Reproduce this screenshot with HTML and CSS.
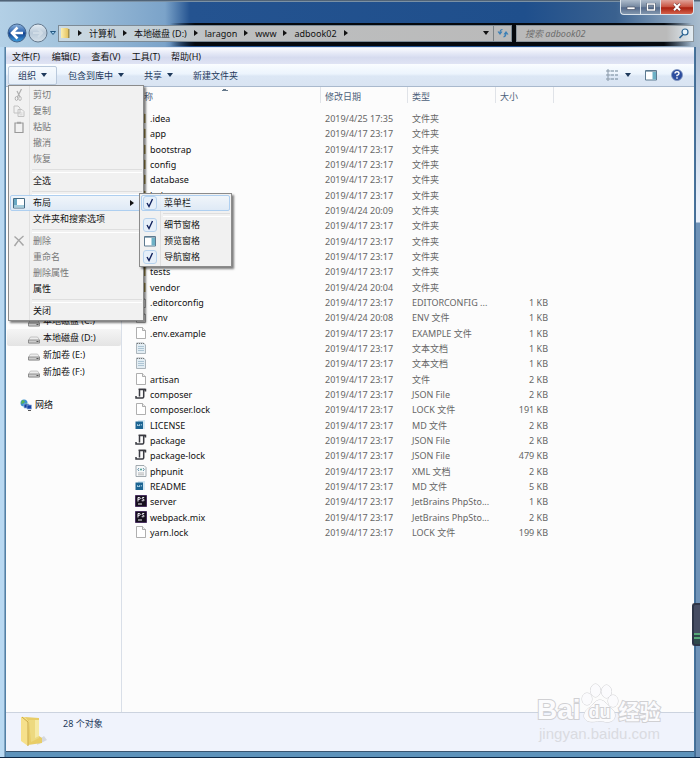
FILE: index.html
```html
<!DOCTYPE html>
<html lang="zh-CN">
<head>
<meta charset="utf-8">
<title>adbook02</title>
<link rel="stylesheet" href="styles.css">
</head>
<body>
<svg class="defs" aria-hidden="true">
  <defs>
    <linearGradient id="gold" x1="0" x2="1"><stop offset="0" stop-color="#fbeeb0"/><stop offset="1" stop-color="#e2bd55"/></linearGradient>
    <linearGradient id="orb" x1="0" y1="0" x2="0" y2="1"><stop offset="0" stop-color="#8fb4dc"/><stop offset=".45" stop-color="#2f66b0"/><stop offset=".5" stop-color="#123f8c"/><stop offset="1" stop-color="#3fa0e0"/></linearGradient>
    <linearGradient id="pale" x1="0" y1="0" x2="0" y2="1"><stop offset="0" stop-color="#e6eef5"/><stop offset=".5" stop-color="#b9c9d8"/><stop offset="1" stop-color="#d5e1ea"/></linearGradient>
    <symbol id="i-folder" viewBox="0 0 12 12"><path d="M2 1h6l2 1v9H2z" fill="url(#gold)"/><path d="M9 2h1.500v9H9z" fill="#a3914f"/></symbol>
    <symbol id="i-page" viewBox="0 0 12 12"><path d="M1.500.5h6l3 3v8h-9z" fill="#fff" stroke="#9a9a9a" stroke-width=".8"/><path d="M7.500.5v3h3" fill="#eee" stroke="#9a9a9a" stroke-width=".8"/></symbol>
    <symbol id="i-text" viewBox="0 0 12 12"><path d="M1.500 1h7l2 2v8.500h-9z" fill="#e3edf3" stroke="#9aa4ab" stroke-width=".8"/><path d="M2 1.500h7" stroke="#777" stroke-dasharray="1 1"/><path d="M3 4.500h6M3 6.500h6M3 8.500h6" stroke="#9fbacb" stroke-width=".8"/></symbol>
    <symbol id="i-json" viewBox="0 0 12 12"><path d="M10.500 3.500V1.500H4.500V8.500M1 8v2h6.500q1.200 0 1.200-1.200V2" fill="none" stroke="#3a3b42" stroke-width="1.500"/><path d="M3.500 1.200h7" stroke="#3a3b42"/></symbol>
    <symbol id="i-md" viewBox="0 0 12 12"><path d="M3 1h7v9H3z" fill="#d5e8f2"/><path d="M.5 2.500h7.500v7.500H.5z" fill="#1c6492"/><path d="M2.500 7V5.500l1 1 1-1V7M6.300 5v1.500" stroke="#c9e6f5" fill="none" stroke-width=".8"/></symbol>
    <symbol id="i-xml" viewBox="0 0 12 12"><path d="M1 .5h8l2 2v9H1z" fill="#f7f9fa" stroke="#8c969c" stroke-width=".8"/><path d="M4 3L2.800 4.500 4 6M8 3l1.200 1.500L8 6" fill="none" stroke="#3c7793" stroke-width=".8"/><circle cx="6" cy="4.500" r="1" fill="#4a9a8c"/><path d="M3 8h6M3 9.800h6" stroke="#999" stroke-width=".7"/></symbol>
    <symbol id="i-ps" viewBox="0 0 12 12"><path d="M.5.5h11v11H.5z" fill="#16101e" stroke="#48305f"/><path d="M3 6.500V2.500h1.300q1 0 1 .9t-1 .9H3M9.200 2.500Q7 2 7 3.200q0 .6 1.100.9t1.100 1Q9 6.300 6.700 5.700" fill="none" stroke="#f5f0fa"/><path d="M3 9h4" stroke="#eee"/></symbol>
    <symbol id="i-drive" viewBox="0 0 12 12"><path d="M2.500 4h7l2 3v3H.5V7z" fill="#ececec" stroke="#aaa" stroke-width=".6"/><path d="M.5 7h11v3H.5z" fill="#ccc" stroke="#7f7f7f" stroke-width=".8"/><path d="M8.500 8.500h2" stroke="#555"/></symbol>
    <symbol id="i-net" viewBox="0 0 12 12"><circle cx="4" cy="4" r="3.500" fill="#3d91cf"/><path d="M2 1l3 1-1 2-3 1M5 5l2-1v3z" fill="#59b352"/><path d="M4 5h5v4H4z" fill="#153f9b" stroke="#9cc0e6" stroke-width=".7"/><path d="M7 6h4.500v4H7z" fill="#1743a8" stroke="#8fb0da" stroke-width=".7"/><path d="M8 11.500h3" stroke="#555"/></symbol>
    <symbol id="i-cut" viewBox="0 0 12 12"><path d="M8.500 0L4.500 8M4 2l3 6" stroke="#b0b0b0" stroke-width="1.200" fill="none"/><ellipse cx="3.500" cy="9.500" rx="1.300" ry="2" fill="none" stroke="#b0b0b0"/><ellipse cx="7" cy="9.500" rx="1.300" ry="2" fill="none" stroke="#bbb"/></symbol>
    <symbol id="i-copy" viewBox="0 0 12 12"><path d="M1 1h4l2 2v5H1zM5 4.500h4l2 2v5H5z" fill="#f1f1f1" stroke="#c2c2c2"/><path d="M6.500 8h3M6.500 9.800h3" stroke="#ccc" stroke-width=".8"/></symbol>
    <symbol id="i-paste" viewBox="0 0 12 12"><path d="M2 2h8v9.500H2z" fill="#f1f1f1" stroke="#999" stroke-width="1.200"/><path d="M4 .8h4v2H4z" fill="#a5a5a5"/></symbol>
    <symbol id="i-delete" viewBox="0 0 12 12"><path d="M1.500 1.500Q6 5 10.500 10.500M10.500 1Q5 5 1.500 11" fill="none" stroke="#a6a6a6" stroke-width="1.500"/></symbol>
    <symbol id="i-layout" viewBox="0 0 12 12"><path d="M.5 1.500h11v9.500H.5z" fill="#fff" stroke="#456b84"/><path d="M1 2h3v6H1z" fill="#69a9c4"/><path d="M1 8h10v2.500H1z" fill="#a5cddd"/></symbol>
    <symbol id="i-preview" viewBox="0 0 12 12"><path d="M.5 1.500h11v9.500H.5z" fill="#fff" stroke="#5d7a90"/><path d="M7.500 2H11v8.500H7.500z" fill="#6db1c6"/><path d="M1 2.500h10" stroke="#96adbb"/></symbol>
    <symbol id="i-check" viewBox="0 0 12 12"><path d="M3 6l2 3.500L8.500 2" fill="none" stroke="#13235e" stroke-width="1.400"/></symbol>
    <symbol id="i-down" viewBox="0 0 6 4"><path d="M0 0h6L3 4z" fill="currentColor"/></symbol>
    <symbol id="i-right" viewBox="0 0 4 6"><path d="M0 0v6l4-3z" fill="currentColor"/></symbol>
  </defs>
</svg>
<div class="window">
  <header class="titlebar">
    <div class="controls">
      <button aria-label="最小化"><svg viewBox="0 0 12 8"><path d="M2 4h8v2.500H2z" fill="#fff" stroke="#4a5568" stroke-width=".7"/></svg></button>
      <button aria-label="最大化"><svg viewBox="0 0 12 8"><path d="M2.500 1h7v6h-7z" fill="none" stroke="#3c4a60" stroke-width="2.400"/><path d="M2.500 1h7v6h-7z" fill="none" stroke="#fff" stroke-width="1.400"/></svg></button>
      <button class="close" aria-label="关闭窗口"><svg viewBox="0 0 12 8"><path d="M3 .8l6 6.400M9 .8L3 7.200" stroke="#6b2d2a" stroke-width="3"/><path d="M3 .8l6 6.400M9 .8L3 7.200" stroke="#fff" stroke-width="2"/></svg></button>
    </div>
    <div class="navrow">
      <button class="orb" aria-label="后退"><svg viewBox="0 0 20 20"><circle cx="10" cy="10" r="9" fill="url(#orb)" stroke="#41638c"/><path d="M10.500 4.500L5 10l5.500 5.500M5.500 10H16" fill="none" stroke="#fff" stroke-width="2.600"/></svg></button>
      <button class="orb" aria-label="前进"><svg viewBox="0 0 20 20"><circle cx="10" cy="10" r="9" fill="url(#pale)" stroke="#65788c"/><path d="M10 6l4 4-4 4M14 10H5" fill="none" stroke="#d0dce6" stroke-width="2"/></svg></button>
      <button class="recent" aria-label="最近的位置"><svg viewBox="0 0 6 4"><path d="M.5.5h5L3 3.500z" fill="#9fd0ef" stroke="#235680"/></svg></button>
      <nav class="address" aria-label="地址">
        <svg class="icon"><use href="#i-folder"/></svg>
        <svg class="tri"><use href="#i-right"/></svg><a href="#">计算机</a>
        <svg class="tri"><use href="#i-right"/></svg><a href="#">本地磁盘 (D:)</a>
        <svg class="tri"><use href="#i-right"/></svg><a href="#">laragon</a>
        <svg class="tri"><use href="#i-right"/></svg><a href="#">www</a>
        <svg class="tri"><use href="#i-right"/></svg><a href="#">adbook02</a>
        <svg class="tri"><use href="#i-right"/></svg>
        <button class="history" aria-label="历史"><svg class="caret"><use href="#i-down"/></svg></button>
        <button class="refresh" aria-label="刷新"><svg class="icon" viewBox="0 0 12 12"><path d="M5.500 2.500Q3 2.500 3 6M1 4.500L3 7l2-2.500M6.500 10Q9 9.500 9 6M7 7.500L9 5l2 2.500" fill="none" stroke="#3b7fb6" stroke-width="1.200"/></svg></button>
      </nav>
      <div class="search">
        <input type="text" aria-label="搜索" placeholder="搜索 adbook02">
        <svg class="icon" viewBox="0 0 12 12"><circle cx="7" cy="5" r="3" fill="#e8f4fb" stroke="#2c6492" stroke-width="1.200"/><path d="M5 7.500L1.500 11" stroke="#2c6492" stroke-width="1.600"/></svg>
      </div>
    </div>
  </header>
  <nav class="menubar" aria-label="菜单">
    <button>文件(F)</button><button>编辑(E)</button><button>查看(V)</button><button>工具(T)</button><button>帮助(H)</button>
  </nav>
  <div class="toolbar">
    <div class="organize">
      <button class="tool open">组织<svg class="caret"><use href="#i-down"/></svg></button>
      <ul class="menu main-menu">
        <li><button disabled><svg class="icon"><use href="#i-cut"/></svg>剪切</button></li>
        <li><button disabled><svg class="icon"><use href="#i-copy"/></svg>复制</button></li>
        <li><button disabled><svg class="icon"><use href="#i-paste"/></svg>粘贴</button></li>
        <li><button disabled><i class="icon"></i>撤消</button></li>
        <li><button disabled><i class="icon"></i>恢复</button></li>
        <li class="sep"></li>
        <li><button><i class="icon"></i>全选</button></li>
        <li class="sep"></li>
        <li class="parent">
          <button class="hot"><svg class="icon"><use href="#i-layout"/></svg>布局<svg class="tri"><use href="#i-right"/></svg></button>
          <ul class="menu sub-menu">
            <li><button class="hot"><svg class="icon tick"><use href="#i-check"/></svg>菜单栏</button></li>
            <li class="sep"></li>
            <li><button><svg class="icon tick"><use href="#i-check"/></svg>细节窗格</button></li>
            <li><button><svg class="icon"><use href="#i-preview"/></svg>预览窗格</button></li>
            <li><button><svg class="icon tick"><use href="#i-check"/></svg>导航窗格</button></li>
          </ul>
        </li>
        <li><button><i class="icon"></i>文件夹和搜索选项</button></li>
        <li class="sep"></li>
        <li><button disabled><svg class="icon"><use href="#i-delete"/></svg>删除</button></li>
        <li><button disabled><i class="icon"></i>重命名</button></li>
        <li><button disabled><i class="icon"></i>删除属性</button></li>
        <li><button><i class="icon"></i>属性</button></li>
        <li class="sep"></li>
        <li><button><i class="icon"></i>关闭</button></li>
      </ul>
    </div>
    <button class="tool">包含到库中<svg class="caret"><use href="#i-down"/></svg></button>
    <button class="tool">共享<svg class="caret"><use href="#i-down"/></svg></button>
    <button class="tool">新建文件夹</button>
    <div class="views">
      <button aria-label="更改视图"><svg class="icon" viewBox="0 0 12 12"><path d="M1 1h2v2H1zM1 5h2v2H1zM1 9h2v2H1z" fill="#fff" stroke="#6c8295" stroke-width=".8"/><path d="M4.500 2H8M9 2h3M4.500 6H8M9 6h3M4.500 10H8M9 10h3" stroke="#6c8295"/></svg></button>
      <button aria-label="更多选项"><svg class="caret"><use href="#i-down"/></svg></button>
      <button class="pane" aria-label="预览窗格"><svg class="icon"><use href="#i-preview"/></svg></button>
      <button aria-label="帮助"><svg class="icon" viewBox="0 0 12 12"><circle cx="6" cy="6" r="5.500" fill="#2b4c9e" stroke="#7f93bd" stroke-width=".8"/><path d="M4 4.500Q4 2.700 6 2.700t2 1.700Q8 5.500 6 6.300v1M6 8.300v1.500" fill="none" stroke="#fff" stroke-width="1.400"/></svg></button>
    </div>
  </div>
  <main class="content">
    <nav class="tree" aria-label="导航窗格">
      <a href="#"><svg class="icon"><use href="#i-drive"/></svg>本地磁盘 (C:)</a>
      <a href="#" class="selected"><svg class="icon"><use href="#i-drive"/></svg>本地磁盘 (D:)</a>
      <a href="#"><svg class="icon"><use href="#i-drive"/></svg>新加卷 (E:)</a>
      <a href="#"><svg class="icon"><use href="#i-drive"/></svg>新加卷 (F:)</a>
      <a href="#" class="root"><svg class="icon"><use href="#i-net"/></svg>网络</a>
    </nav>
    <div class="files">
      <table>
        <colgroup><col class="c-name"><col class="c-date"><col class="c-type"><col class="c-size"><col></colgroup>
        <thead><tr><th><span class="sorted">名称</span></th><th><span>修改日期</span></th><th><span>类型</span></th><th><span>大小</span></th><td></td></tr></thead>
        <tbody>
          <tr><td><svg class="icon"><use href="#i-folder"/></svg>.idea</td><td>2019/4/25 17:35</td><td>文件夹</td><td></td></tr>
          <tr><td><svg class="icon"><use href="#i-folder"/></svg>app</td><td>2019/4/17 23:17</td><td>文件夹</td><td></td></tr>
          <tr><td><svg class="icon"><use href="#i-folder"/></svg>bootstrap</td><td>2019/4/17 23:17</td><td>文件夹</td><td></td></tr>
          <tr><td><svg class="icon"><use href="#i-folder"/></svg>config</td><td>2019/4/17 23:17</td><td>文件夹</td><td></td></tr>
          <tr><td><svg class="icon"><use href="#i-folder"/></svg>database</td><td>2019/4/17 23:17</td><td>文件夹</td><td></td></tr>
          <tr><td><svg class="icon"><use href="#i-folder"/></svg>helper</td><td>2019/4/17 23:17</td><td>文件夹</td><td></td></tr>
          <tr><td><svg class="icon"><use href="#i-folder"/></svg></td><td>2019/4/24 20:09</td><td>文件夹</td><td></td></tr>
          <tr><td><svg class="icon"><use href="#i-folder"/></svg></td><td>2019/4/17 23:17</td><td>文件夹</td><td></td></tr>
          <tr><td><svg class="icon"><use href="#i-folder"/></svg></td><td>2019/4/17 23:17</td><td>文件夹</td><td></td></tr>
          <tr><td><svg class="icon"><use href="#i-folder"/></svg></td><td>2019/4/17 23:17</td><td>文件夹</td><td></td></tr>
          <tr><td><svg class="icon"><use href="#i-folder"/></svg>tests</td><td>2019/4/17 23:17</td><td>文件夹</td><td></td></tr>
          <tr><td><svg class="icon"><use href="#i-folder"/></svg>vendor</td><td>2019/4/24 20:04</td><td>文件夹</td><td></td></tr>
          <tr><td><svg class="icon"><use href="#i-page"/></svg>.editorconfig</td><td>2019/4/17 23:17</td><td>EDITORCONFIG ...</td><td>1 KB</td></tr>
          <tr><td><svg class="icon"><use href="#i-page"/></svg>.env</td><td>2019/4/24 20:08</td><td>ENV 文件</td><td>1 KB</td></tr>
          <tr><td><svg class="icon"><use href="#i-page"/></svg>.env.example</td><td>2019/4/17 23:17</td><td>EXAMPLE 文件</td><td>1 KB</td></tr>
          <tr><td><svg class="icon"><use href="#i-text"/></svg></td><td>2019/4/17 23:17</td><td>文本文档</td><td>1 KB</td></tr>
          <tr><td><svg class="icon"><use href="#i-text"/></svg></td><td>2019/4/17 23:17</td><td>文本文档</td><td>1 KB</td></tr>
          <tr><td><svg class="icon"><use href="#i-page"/></svg>artisan</td><td>2019/4/17 23:17</td><td>文件</td><td>2 KB</td></tr>
          <tr><td><svg class="icon"><use href="#i-json"/></svg>composer</td><td>2019/4/17 23:17</td><td>JSON File</td><td>2 KB</td></tr>
          <tr><td><svg class="icon"><use href="#i-page"/></svg>composer.lock</td><td>2019/4/17 23:17</td><td>LOCK 文件</td><td>191 KB</td></tr>
          <tr><td><svg class="icon"><use href="#i-md"/></svg>LICENSE</td><td>2019/4/17 23:17</td><td>MD 文件</td><td>2 KB</td></tr>
          <tr><td><svg class="icon"><use href="#i-json"/></svg>package</td><td>2019/4/17 23:17</td><td>JSON File</td><td>2 KB</td></tr>
          <tr><td><svg class="icon"><use href="#i-json"/></svg>package-lock</td><td>2019/4/17 23:17</td><td>JSON File</td><td>479 KB</td></tr>
          <tr><td><svg class="icon"><use href="#i-xml"/></svg>phpunit</td><td>2019/4/17 23:17</td><td>XML 文档</td><td>2 KB</td></tr>
          <tr><td><svg class="icon"><use href="#i-md"/></svg>README</td><td>2019/4/17 23:17</td><td>MD 文件</td><td>5 KB</td></tr>
          <tr><td><svg class="icon"><use href="#i-ps"/></svg>server</td><td>2019/4/17 23:17</td><td>JetBrains PhpSto...</td><td>1 KB</td></tr>
          <tr><td><svg class="icon"><use href="#i-ps"/></svg>webpack.mix</td><td>2019/4/17 23:17</td><td>JetBrains PhpSto...</td><td>2 KB</td></tr>
          <tr><td><svg class="icon"><use href="#i-page"/></svg>yarn.lock</td><td>2019/4/17 23:17</td><td>LOCK 文件</td><td>199 KB</td></tr>
        </tbody>
      </table>
    </div>
  </main>
  <footer class="details">
    <svg viewBox="0 0 30 32"><path d="M17 29l10-5-3-4-6 4z" fill="#d5d8de"/><path d="M5 1l14 1v18l3 2v5l-14 2z" fill="#e8cd68"/><path d="M9 4h10v18l-8 4z" fill="#edd980"/><path d="M15 4h4v16l-4 2z" fill="#f6eaa5"/><path d="M1 1l4 0 4 5-1 24-7-5z" fill="#f6e08b"/><path d="M2 1l6 5v24" fill="none" stroke="#c9a846"/></svg>
    <span>28 个对象</span>
  </footer>
</div>
<div class="gadget"></div>
<div class="watermark">
  <div class="brand"><span class="bai">Bai</span>
    <span class="paw"><svg viewBox="0 0 38 40"><g fill="#fbfbfd" stroke="#d0d0d3"><ellipse cx="6" cy="16" rx="5" ry="6"/><ellipse cx="14.500" cy="7.500" rx="5" ry="6.500"/><ellipse cx="25.500" cy="8.500" rx="5" ry="6.500"/><ellipse cx="32" cy="18" rx="5" ry="6"/><path d="M19 17c5 0 8 6 12 9s5 12-3 13c-4 .5-6-1-9-1s-7 1.500-11 .5C0 36 3 28 8 25c4-3 6-8 11-8z"/></g></svg><b>du</b></span>
    <span class="jy">经验</span></div>
  <div class="site">jingyan.baidu.com</div>
</div>
</body>
</html>
```
FILE: styles.css
```css
* { box-sizing: border-box; }
body {
  margin: 0;
  position: relative;
  font: 9px/15px "Noto Sans", "Noto Sans CJK SC", sans-serif;
  color: #111;
}
button, input { font: inherit; color: inherit; border: 0; padding: 0; margin: 0; background: none; }
a { color: inherit; text-decoration: none; }
ul { list-style: none; margin: 0; padding: 0; }
.defs { position: absolute; width: 0; height: 0; }
.icon { display: block; width: 12px; height: 12px; flex: none; }
.caret { display: block; width: 6px; height: 4px; flex: none; }
.tri { display: block; width: 4px; height: 6px; flex: none; }

.window {
  display: flex;
  flex-direction: column;
  min-height: 100vh;
  padding: 0 6px 6px;
  background:
    linear-gradient(#0d2745, #0d2745) left bottom / 100% 1px no-repeat,
    linear-gradient(#8fa5be, #b9cbe0 90px, #e8f0fb 205px, #e8f0fb 222px, #6f93b8 223px) right top / 4px 100% no-repeat,
    linear-gradient(90deg, #b9d9f2 0 4px, #476f92 5px, #5e93bb 6px calc(100% - 6px), #2d5580 calc(100% - 5px), #8fb0cf calc(100% - 3px), #7ea0c2);
}

/* Title bar */
.titlebar {
  margin: 0 -6px;
  padding: 0 6px;
  height: 47px;
  background:
    linear-gradient(#3c4d60, #8fa7bc) top / 100% 2px no-repeat,
    linear-gradient(90deg, transparent 170px, #05090e 195px calc(100% - 36px), transparent calc(100% - 8px)) 0 23px / 100% 23px no-repeat,
    linear-gradient(90deg, #b3d0e6 0, #a4c4dd 60px, #7ba3c9 165px, #245390 190px, #1f4f8c 75%, #3a618f 88%, #a9bdcf 100%);
}
.controls { display: flex; justify-content: flex-end; height: 15px; }
.controls button {
  width: 20px;
  height: 15px;
  display: grid;
  place-items: center;
  border: solid #dbe4ec;
  border-width: 0 0 1px 1px;
  background: linear-gradient(#aebccc, #74879f 50%, #53698a 55%, #8397ae);
}
.controls button:first-child { border-bottom-left-radius: 4px; }
.controls .close { width: 34px; border-right-width: 1px; border-bottom-right-radius: 4px; background: linear-gradient(#e0a399, #c8513e 50%, #a9200f 55%, #d4624c); }
.controls svg { width: 12px; height: 8px; }
.navrow { display: flex; align-items: center; height: 36px; }
.orb { width: 20px; height: 20px; margin-left: 1px; }
.orb svg { display: block; width: 20px; height: 20px; }
.recent { width: 10px; display: grid; place-items: center; }
.recent svg { width: 6px; height: 4px; }
.address {
  display: flex;
  align-items: center;
  flex: 1;
  height: 17px;
  border: 1px solid #7d8b96;
  background: linear-gradient(90deg, #c9d9e4, #c3ced4 100px, #bdbfc0 160px, #bababa);
}
.address .tri { margin: 0 7px; }
.history { margin-left: auto; width: 15px; height: 15px; display: grid; place-items: center; }
.refresh { width: 18px; height: 15px; display: grid; place-items: center; border-left: 1px solid #7d8488; }
.search {
  display: flex;
  align-items: center;
  width: 178px;
  height: 17px;
  margin-left: 4px;
  padding: 0 3px 0 8px;
  border: 1px solid #8d969d;
  background: linear-gradient(90deg, #bababa 85%, #e3edf4);
}
.search input { flex: 1; min-width: 0; font-style: italic; outline: 0; }
.search input::placeholder { color: #6c6c6c; opacity: 1; }

/* Menu bar and toolbar */
.menubar {
  display: flex;
  height: 17px;
  border-top: 1px solid #dfe6f2;
  background: linear-gradient(#fafbfe, #e4e8f6 35%, #d6dbef 60%, #e0e4f4);
}
.menubar button { width: 40px; text-align: center; }
.toolbar {
  display: flex;
  align-items: center;
  height: 23px;
  padding: 0 11px 0 2px;
  color: #1e395b;
  border-bottom: 1px solid #a9b9cd;
  background: linear-gradient(#fafdff, #ecf4fd 45%, #dce7f5 55%, #d9e4f2);
}
.organize { position: relative; }
.tool { display: flex; align-items: center; gap: 5px; height: 19px; padding: 0 9px 0 11px; }
.tool.open { padding: 0 9px; border: 1px solid #b9c9dc; border-radius: 2px; background: linear-gradient(#f6fafe, #e6eff9); }
.views { display: flex; align-items: center; gap: 7px; margin-left: auto; }
.pane { margin: 0 7px; }

.menu {
  position: absolute;
  z-index: 2;
  padding: 1px;
  color: #111;
  border: 1px solid #8b8b8b;
  background: linear-gradient(#e0e0e0, #e0e0e0) 20px 0 / 1px 100% no-repeat, #f1f1f1;
  box-shadow: 2px 2px 2px rgba(0, 0, 0, .5);
}
.main-menu { left: 0; top: 19px; width: 136px; }
.parent { position: relative; }
.sub-menu { left: 129px; top: -2px; width: 93px; }
.menu button { display: flex; align-items: center; gap: 8px; width: 100%; height: 16px; padding: 0 7px 0 2px; border: 1px solid transparent; border-radius: 2px; text-align: left; }
.menu button:disabled { color: #777; }
.menu .tri { margin-left: auto; }
.menu .hot { border-color: #aecff0; background: linear-gradient(rgba(240, 246, 252, .8), rgba(218, 232, 247, .8)); }
.sep { height: 6px; padding-top: 2px; }
.sep::before { content: ""; display: block; height: 2px; margin-left: 22px; border-top: 1px solid #dedede; border-bottom: 1px solid #fff; }
.tick { border-radius: 2px; outline: 1px solid #b6d2ee; background: #e6eff9; }

/* Folder view */
.content { display: flex; flex: 1; background: #fcfcfc; }
.tree { width: 116px; padding-top: 225px; border-right: 1px solid #d9dfe8; flex: none; }
.tree a { display: flex; align-items: center; gap: 3px; height: 17px; padding-left: 21px; margin-left: 1px; }
.tree .icon { margin-top: 3px; }
.tree .selected { background: linear-gradient(#f5f5f5, #e4e4e4); border-radius: 2px; }
.tree .root { margin-top: 16px; padding-left: 13px; }
.tree .root .icon { margin-top: 0; }
.files { flex: 1; min-width: 0; }
table { width: 100%; table-layout: fixed; border-collapse: collapse; }
.c-name { width: 199px; }
.c-date { width: 87px; }
.c-type { width: 88px; }
.c-size { width: 58px; }
th { height: 24px; padding: 0; vertical-align: top; text-align: left; font-weight: 400; color: #4c607a; }
th span { display: block; height: 16px; padding: 2px 0 0 4px; border-right: 1px solid #e0e3e8; }
th .sorted {
  padding-left: 13px;
  background: linear-gradient(135deg, transparent 50%, #667a8c 50%) 100px 1px / 3px 3px no-repeat, linear-gradient(225deg, transparent 50%, #667a8c 50%) 103px 1px / 3px 3px no-repeat;
}
tbody td { height: 15px; padding: 0 0 0 4px; color: #666; white-space: nowrap; }
tbody tr:nth-child(3n) td { height: 16px; }
tbody td:first-child { padding-left: 13px; color: #111; }
tbody td:nth-child(4) { padding: 0 6px 0 0; text-align: right; }
td .icon { display: inline-block; margin: 1px 3px 0 0; vertical-align: top; }

.details {
  display: flex;
  gap: 13px;
  height: 40px;
  padding: 3px 14px;
  color: #1e395b;
  border-top: 1px solid #ccd3df;
  border-bottom: 1px solid #38546f;
  background: #f0f3fc;
}
.details svg { width: 30px; height: 32px; }

/* Overlays */
.gadget {
  position: absolute;
  right: 0;
  top: 603px;
  width: 8px;
  height: 43px;
  border: 2px solid #2e3547;
  border-right: 0;
  border-radius: 3px 0 0 3px;
  background: linear-gradient(#454c62 28px, #57a878 28px 30px, #2f4a4c 30px 32px, #57a878 32px 34px, #2f4a4c 34px);
}
.watermark { position: absolute; right: 38px; bottom: 15px; width: 125px; color: #fbfbfd; }
.brand { display: flex; align-items: flex-end; height: 44px; font: bold 28px/30px "Liberation Sans", sans-serif; -webkit-text-stroke: 2px #d0d0d3; paint-order: stroke fill; }
.paw { position: relative; width: 38px; height: 42px; flex: none; }
.paw svg { display: block; width: 38px; height: 40px; }
.paw b { position: absolute; left: 0; right: 0; bottom: 4px; text-align: center; font-size: 18px; line-height: 18px; }
.jy { font: bold 21px/30px "Noto Sans CJK SC", sans-serif; }
.site { font: 15px/18px "Liberation Sans", sans-serif; text-align: center; color: #dadbe1; }
```
